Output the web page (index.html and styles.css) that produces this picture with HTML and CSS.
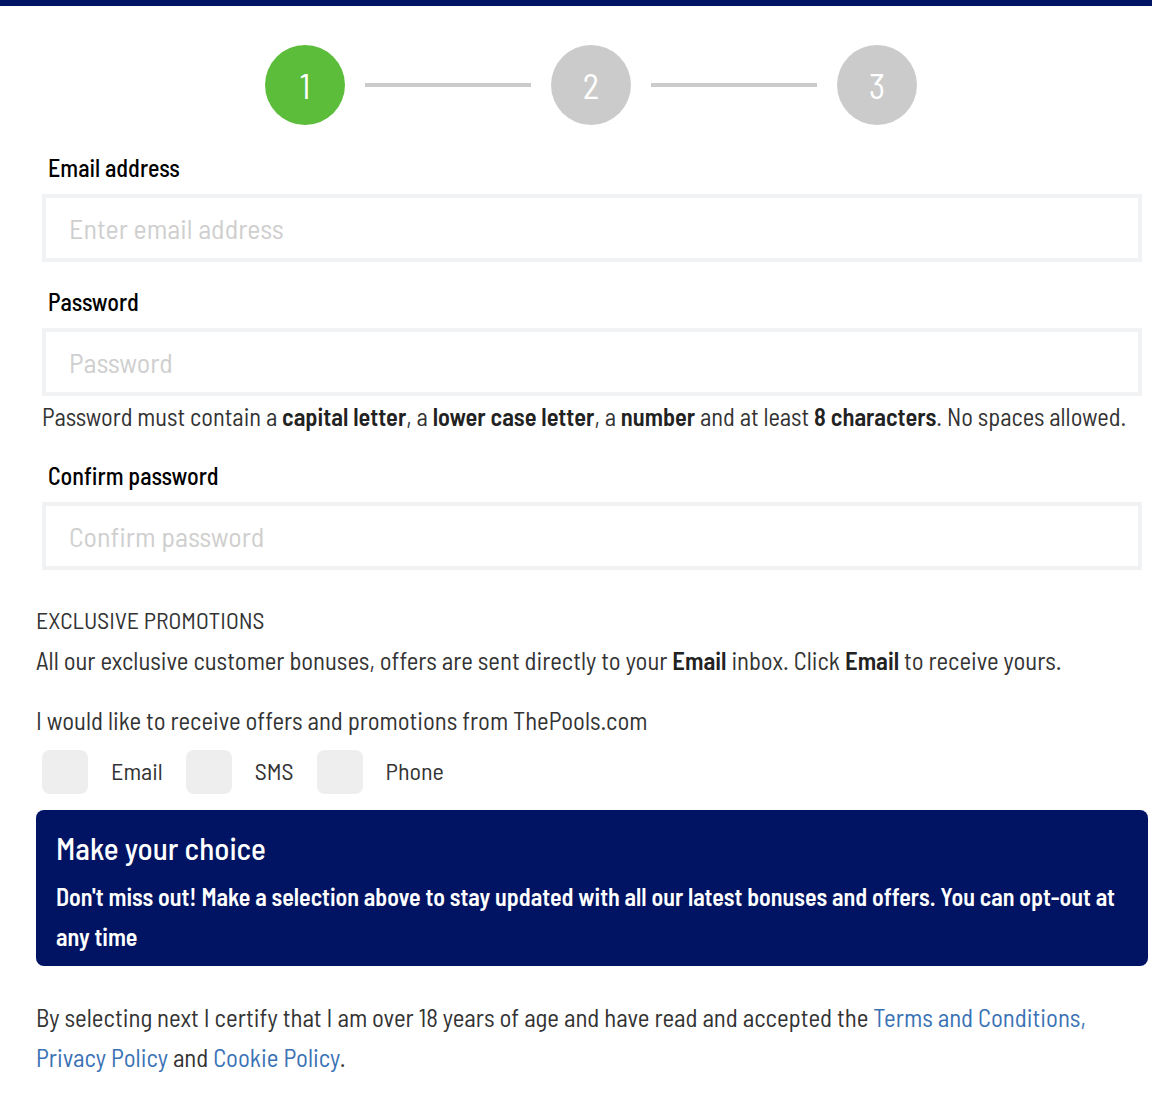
FILE: index.html
```html
<!DOCTYPE html>
<html lang="en">
<head>
<meta charset="utf-8">
<title>Register</title>
<link rel="stylesheet" href="styles.css">
</head>
<body>
<div class="topbar"></div>
<main class="page">
  <div class="steps">
    <div class="step step-active">1</div>
    <div class="step-line"></div>
    <div class="step">2</div>
    <div class="step-line"></div>
    <div class="step">3</div>
  </div>

  <div class="field">
    <label class="label" for="email">Email address</label>
    <input class="input" id="email" type="text" placeholder="Enter email address">
  </div>

  <div class="field">
    <label class="label label-pw" for="pw">Password</label>
    <input class="input" id="pw" type="password" placeholder="Password">
    <p class="hint">Password must contain a <b>capital letter</b>, a <b>lower case letter</b>, a <b>number</b> and at least <b>8 characters</b>. No spaces allowed.</p>
  </div>

  <div class="field">
    <label class="label label-confirm" for="cpw">Confirm password</label>
    <input class="input" id="cpw" type="password" placeholder="Confirm password">
  </div>

  <section class="promo">
    <h2 class="promo-title">EXCLUSIVE PROMOTIONS</h2>
    <p class="promo-text">All our exclusive customer bonuses, offers are sent directly to your <b>Email</b> inbox. Click <b>Email</b> to receive yours.</p>
    <p class="promo-text promo-ask">I would like to receive offers and promotions from ThePools.com</p>
    <div class="choices">
      <label class="choice"><span class="box"></span><span class="choice-text">Email</span></label>
      <label class="choice"><span class="box"></span><span class="choice-text">SMS</span></label>
      <label class="choice"><span class="box"></span><span class="choice-text">Phone</span></label>
    </div>
  </section>

  <div class="notice">
    <h3 class="notice-title">Make your choice</h3>
    <p class="notice-text">Don't miss out! Make a selection above to stay updated with all our latest bonuses and offers. You can opt-out at any time</p>
  </div>

  <p class="legal">By selecting next I certify that I am over 18 years of age and have read and accepted the <a href="#">Terms and Conditions,</a> <a href="#">Privacy Policy</a> and <a href="#">Cookie Policy</a>.</p>
</main>
</body>
</html>
```

FILE: styles.css
```css
* { box-sizing: border-box; }

body {
  margin: 0;
  background: #fff;
  font-family: "Barlow Semi Condensed", "Roboto Condensed", "Roboto", sans-serif;
  color: #333;
}

.topbar {
  height: 6px;
  background: #001463;
}

.page {
  padding: 0 4px 0 36px;
}

.steps {
  display: flex;
  justify-content: center;
  align-items: center;
  gap: 20px;
  margin-top: 39px;
  padding-right: 2px;
}

.step {
  width: 80px;
  height: 80px;
  border-radius: 50%;
  background: #cbcbcb;
  color: #fff;
  display: flex;
  align-items: center;
  justify-content: center;
  font-size: 35px;
}

.step-active {
  background: #5bbd3a;
}

.step-line {
  width: 166px;
  height: 4px;
  background: #cbcbcb;
}

.field {
  padding: 0 6px;
}

.label {
  display: block;
  padding-left: 6px;
  font-size: 24px;
  line-height: 28px;
  font-weight: 500;
  color: #000;
  margin: 29px 0 12px;
}

.label-pw { margin-top: 26px; }
.label-confirm { margin-top: 31px; }

.input {
  display: block;
  width: 100%;
  height: 68px;
  border: 4px solid #f1f2f4;
  padding: 0 0 0 23px;
  font-family: inherit;
  font-size: 28px;
  color: #333;
  outline: none;
  background: #fff;
}

.input::placeholder {
  color: #cfcfcf;
}

.hint {
  margin: 7px 0 0;
  font-size: 24.4px;
  line-height: 28px;
  color: #333;
}

.hint b { font-weight: 600; color: #222; }

.promo {
  margin-top: 30px;
}

.promo-title {
  margin: 0;
  font-size: 23.7px;
  line-height: 40px;
  font-weight: 400;
  color: #333;
}

.promo-text {
  margin: 0;
  font-size: 24.7px;
  line-height: 40px;
  color: #333;
}

.promo-text b { font-weight: 600; color: #222; }

.promo-ask { margin-top: 20px; }

.choices {
  display: flex;
  align-items: center;
  margin-top: 10px;
  padding-left: 6px;
}

.choice {
  display: flex;
  align-items: center;
  margin-right: 23px;
}

.box {
  width: 46px;
  height: 44px;
  border-radius: 8px;
  background: #eeeeee;
  margin-right: 23px;
}

.choice-text {
  font-size: 24px;
  line-height: 40px;
  padding-bottom: 3px;
  color: #333;
}

.notice {
  margin-top: 16px;
  background: #001463;
  border-radius: 8px;
  padding: 18px 20px 9px;
  color: #fff;
}

.notice-title {
  margin: 0;
  font-size: 31px;
  line-height: 40px;
  font-weight: 500;
}

.notice-text {
  margin: 9px 0 0;
  font-size: 24px;
  line-height: 40px;
  font-weight: 600;
}

.legal {
  margin: 31px 0 0;
  font-size: 24.8px;
  line-height: 40px;
  color: #333;
}

.legal a {
  color: #3a72b5;
  text-decoration: none;
}
```
